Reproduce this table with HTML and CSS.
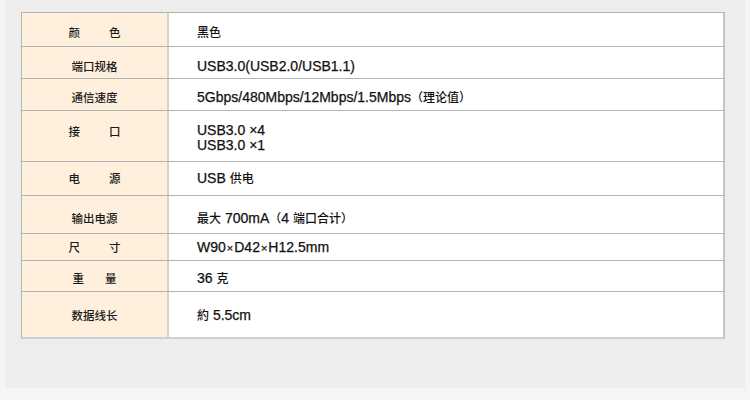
FILE: index.html
```html
<!DOCTYPE html>
<html lang="zh">
<head>
<meta charset="utf-8">
<title>规格</title>
<link rel="stylesheet" href="styles.css">
</head>
<body>
<div class="page">
  <div class="panel">
    <div class="spec">
      <div class="row r1"><div class="label spaced"><span>颜</span><span>色</span></div><div class="value"><span class="cjk">黑色</span></div></div>
      <div class="row r2"><div class="label">端口规格</div><div class="value">USB3.0(USB2.0/USB1.1)</div></div>
      <div class="row r3"><div class="label">通信速度</div><div class="value">5Gbps/480Mbps/12Mbps/1.5Mbps<span class="cjk">（理论值）</span></div></div>
      <div class="row r4"><div class="label spaced"><span>接</span><span>口</span></div><div class="value">USB3.0 ×4<br>USB3.0 ×1</div></div>
      <div class="row r5"><div class="label spaced"><span>电</span><span>源</span></div><div class="value">USB <span class="cjk">供电</span></div></div>
      <div class="row r6"><div class="label">输出电源</div><div class="value"><span class="cjk">最大</span> 700mA<span class="cjk">（</span>4 <span class="cjk">端口合计）</span></div></div>
      <div class="row r7"><div class="label spaced"><span>尺</span><span>寸</span></div><div class="value">W90<span class="x">×</span>D42<span class="x">×</span>H12.5mm</div></div>
      <div class="row r8"><div class="label spaced narrow"><span>重</span><span>量</span></div><div class="value">36 <span class="cjk">克</span></div></div>
      <div class="row r9"><div class="label">数据线长</div><div class="value"><span class="cjk">約</span> 5.5cm</div></div>
    </div>
  </div>
</div>
</body>
</html>
```
FILE: styles.css
```css
* { box-sizing: border-box; }
html, body { margin: 0; padding: 0; }
body {
  width: 750px;
  height: 400px;
  background: #f4f5f7;
  font-family: "Liberation Sans", "Noto Sans CJK SC", sans-serif;
  color: #111;
  overflow: hidden;
}
.page { padding: 0 5px; }
.panel {
  height: 388px;
  background: #ededee;
  padding: 12px 0 0 16px;
}
.spec {
  width: 704px;
  border: 1px solid #b3b3b3;
  border-right: 2px solid #c4c4c4;
  border-bottom: 2px solid #cfcfcf;
  background: #fff;
}
.row {
  display: grid;
  grid-template-columns: 147px 1fr;
  border-top: 1px solid #b3b3b3;
}
.row:first-child { border-top: none; }
.label {
  background: #fef0dc;
  border-right: 2px solid #d6d2cc;
  font-family: "Noto Sans CJK SC", sans-serif;
  font-weight: 500;
  font-size: 11.5px;
  line-height: 16px;
  color: #1a1a1a;
  text-align: center;
}
.label.spaced {
  display: flex;
  justify-content: center;
  gap: 29px;
}
.label.spaced.narrow { gap: 21px; }
.value {
  font-size: 14px;
  line-height: 16px;
  padding-left: 28px;
  -webkit-text-stroke: 0.25px #111;
}
.cjk {
  font-family: "Noto Sans CJK SC", sans-serif;
  font-weight: 500;
  font-size: 12px;
  -webkit-text-stroke: 0;
}
.x { font-size: 11px; padding: 0 1px; }
.r1 > div { padding-top: 11px; padding-bottom: 6px; }
.r2 > div { padding-top: 11px; padding-bottom: 4px; }
.r3 > div { padding-top: 10px; padding-bottom: 5px; }
.r4 > div { padding-top: 12px; padding-bottom: 8px; }
.r4 .value { line-height: 15px; }
.r5 > div { padding-top: 8px; padding-bottom: 9px; }
.r6 > div { padding-top: 14px; padding-bottom: 7px; }
.r7 > div { padding-top: 5px; padding-bottom: 4px; }
.r8 > div { padding-top: 9px; padding-bottom: 5px; }
.r9 > div { padding-top: 15px; padding-bottom: 14px; }
```
